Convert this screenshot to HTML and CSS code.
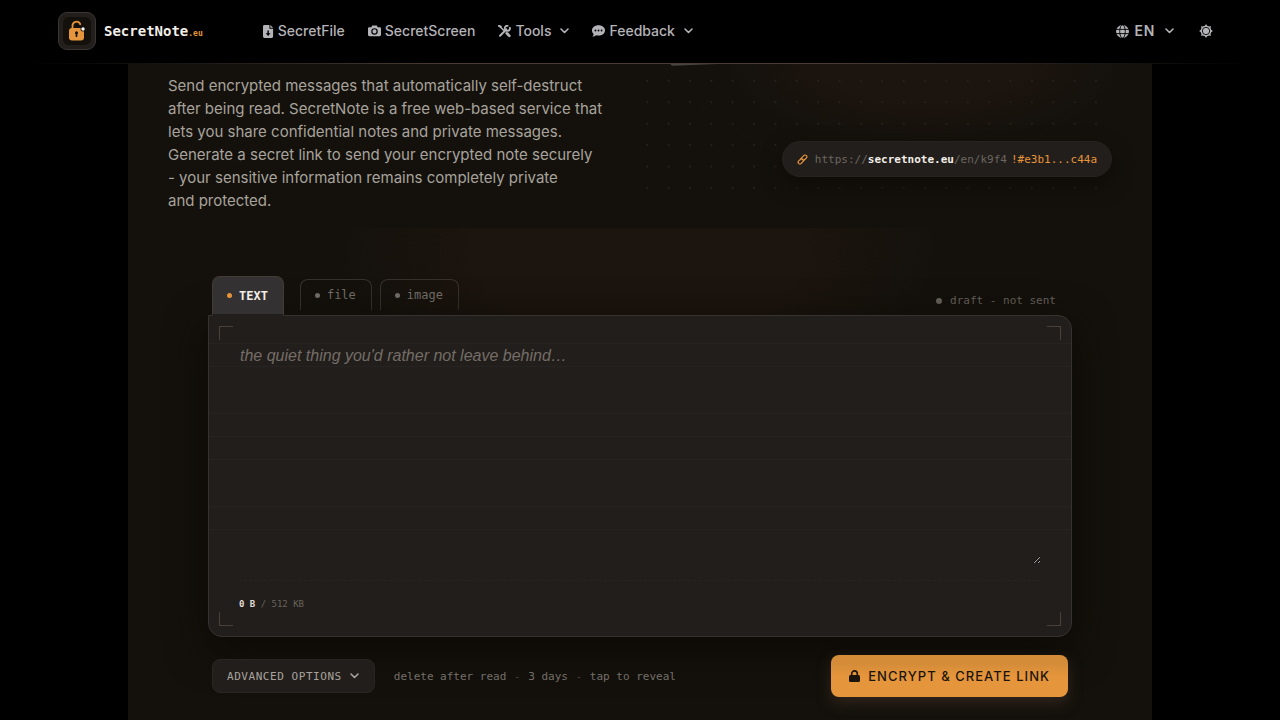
FILE: index.html
```html
<!DOCTYPE html>
<html lang="en">
<head>
    <meta charset="UTF-8">
    <meta name="viewport" content="width=device-width, initial-scale=1.0">
    <title>SecretNote.eu</title>
    <link rel="stylesheet" href="styles.css">
</head>
<body>
    <header class="topbar">
        <a class="brand" href="#">
            <span class="brand-mark">
                <svg width="28" height="28" viewBox="0 0 28 28">
                    <rect width="28" height="28" rx="6" fill="#14100b"/>
                    <path d="M9.500 12V8.800a4 4 0 0 1 7.700-1.600" fill="none" stroke="#e5953b" stroke-width="1.800" stroke-linecap="round"/>
                    <rect x="6" y="11" width="15" height="12.500" rx="3" fill="#e5953b"/>
                    <circle cx="13.500" cy="15.800" r="1.500" fill="#14100b"/>
                    <rect x="12.700" y="16" width="1.600" height="4" fill="#14100b"/>
                    <circle cx="20" cy="12" r="2.500" fill="#14100b"/>
                    <circle cx="20" cy="12" r="1.700" fill="#fff"/>
                </svg>
            </span>
            <span class="brand-name">SecretNote<small>.eu</small></span>
        </a>
        <nav class="nav">
            <a href="#">
                <svg width="11" height="13" viewBox="0 0 12 14"><path fill="currentColor" fill-rule="evenodd" d="M1.500 0H7v4h4v8.500c0 .8-.7 1.500-1.500 1.500h-8C.7 14 0 13.300 0 12.500v-11C0 .7.7 0 1.500 0zM8 0l3 3H8zM4.800 6v3H3l2.600 3L8.200 9H6.400V6z"/></svg>
                SecretFile
            </a>
            <a href="#">
                <svg width="13" height="13" viewBox="0 0 14 14"><path fill="currentColor" fill-rule="evenodd" d="M4.500 0.500h5l.9 1.800h2.100c.8 0 1.500.6 1.500 1.400v6.800c0 .8-.7 1.500-1.500 1.500h-11C.7 12 0 11.300 0 10.500V3.700c0-.8.7-1.400 1.500-1.400h2.100zM7 3.400a3.500 3.500 0 1 0 0 7 3.500 3.500 0 0 0 0-7zm0 1.300a2.200 2.200 0 1 1 0 4.400 2.200 2.200 0 0 1 0-4.400z"/></svg>
                SecretScreen
            </a>
            <a href="#">
                <svg width="13" height="13" viewBox="0 0 14 14" fill="none" stroke="currentColor" stroke-linecap="round"><path d="M2.200 11.500 9 4.700" stroke-width="2.200"/><path d="M12.800 3A2.800 2.800 0 1 1 10.300.8" stroke-width="2"/><path d="M1.300 1 7 6.500" stroke-width="1.600"/><path d="M1.100 1l1.900.8" stroke-width="2.200"/><path d="m9.500 9 2.700 2.700" stroke-width="3"/></svg>
                Tools
                <svg class="caret" width="9" height="6" viewBox="0 0 9 6"><path d="m1 1 3.500 3.500L8 1"/></svg>
            </a>
            <a href="#">
                <svg width="13" height="13" viewBox="0 0 14 14"><path fill="currentColor" fill-rule="evenodd" d="M7 .3c3.900 0 7 2.400 7 5.500s-3.100 5.600-7 5.600c-.9 0-1.700-.1-2.500-.4C3.500 11.800 2 12.500.4 12.500c.8-.9 1.300-1.900 1.400-2.900C.7 8.600 0 7.300 0 5.800 0 2.700 3.100.3 7 .3zM3.700 4.900a1 1 0 1 0 0 2 1 1 0 0 0 0-2zm3.300 0a1 1 0 1 0 0 2 1 1 0 0 0 0-2zm3.300 0a1 1 0 1 0 0 2 1 1 0 0 0 0-2z"/></svg>
                Feedback
                <svg class="caret" width="9" height="6" viewBox="0 0 9 6"><path d="m1 1 3.500 3.500L8 1"/></svg>
            </a>
        </nav>
        <div class="prefs">
            <button class="pref lang" type="button">
                <svg width="13" height="13" viewBox="0 0 14 14"><circle cx="7" cy="7" r="7" fill="currentColor"/><g fill="none" stroke="#000"><path d="M0 4.700h14M0 9.300h14"/><ellipse cx="7" cy="7" rx="3" ry="7"/></g></svg>
                EN
                <svg class="caret" width="9" height="6" viewBox="0 0 9 6"><path d="m1 1 3.500 3.500L8 1"/></svg>
            </button>
            <button class="pref" type="button" aria-label="Theme">
                <svg width="14" height="14" viewBox="0 0 16 16"><path fill="currentColor" d="M8 0l1.900 3.400 3.800-1.100-1.100 3.800L16 8l-3.400 1.900 1.100 3.800-3.800-1.100L8 16l-1.900-3.400-3.800 1.100 1.100-3.800L0 8l3.400-1.900-1.100-3.800 3.800 1.100z"/><circle cx="8" cy="8" r="6.200" fill="currentColor"/><circle cx="8" cy="8" r="4.200" fill="none" stroke="#000"/></svg>
            </button>
        </div>
    </header>

    <main class="page">
        <section class="hero">
            <p class="lead">Send encrypted messages that automatically self-destruct<br> after being read. SecretNote is a free web-based service that<br> lets you share confidential notes and private messages.<br> Generate a secret link to send your encrypted note securely<br> - your sensitive information remains completely private<br> and protected.</p>
            <div class="visual">
                <svg class="dots" viewBox="0 0 530 146">
                    <defs>
                        <pattern id="dot" width="24" height="24" patternUnits="userSpaceOnUse" x="-4" y="7"><circle cx="12" cy="12" r="1"/></pattern>
                    </defs>
                    <circle class="ring" cx="284" cy="-210" r="334"/>
                    <rect width="524" height="146" fill="url(#dot)"/>
                    <path class="sheet" d="M34 0l2 2 50-2z"/>
                </svg>
                <div class="link-pill">
                    <svg width="11" height="11" viewBox="0 0 12 12"><path d="M4.200 6.200 3.800 5.500 7.300 1.800a1.900 1.900 0 0 1 3 2.400L8.500 6.200a1.800 1.800 0 0 1-2.500.1M7.800 5.800l.4.700-3.500 3.700a1.900 1.900 0 0 1-3-2.400l1.800-2a1.800 1.800 0 0 1 2.500-.1"/></svg>
                    <span>https://<b>secretnote.eu</b>/en/k9f4</span><em>!#e3b1...c44a</em>
                </div>
            </div>
        </section>

        <form class="composer">
            <div class="tabs">
                <button class="tab active" type="button">TEXT</button>
                <button class="tab" type="button">file</button>
                <button class="tab" type="button">image</button>
                <span class="status">draft - not sent</span>
            </div>
            <div class="card">
                <i class="corner tl"></i><i class="corner tr"></i><i class="corner bl"></i><i class="corner br"></i>
                <textarea class="note" aria-label="Note" placeholder="the quiet thing you'd rather not leave behind…"></textarea>
                <div class="meter"><b>0 B</b> / 512 KB</div>
            </div>
            <div class="actions">
                <button class="advanced" type="button">ADVANCED OPTIONS
                    <svg class="caret" width="9" height="6" viewBox="0 0 9 6"><path d="m1 1 3.500 3.500L8 1"/></svg>
                </button>
                <span class="summary">delete after read <i>-</i> 3 days <i>-</i> tap to reveal</span>
                <button class="submit" type="submit">
                    <svg width="11" height="13" viewBox="0 0 11 13"><path d="M2.700 6V3.700a2.800 2.800 0 0 1 5.600 0V6" fill="none" stroke="currentColor" stroke-width="1.600"/><rect y="5" width="11" height="7" rx="1.500" fill="currentColor"/></svg>
                    ENCRYPT &amp; CREATE LINK
                </button>
            </div>
        </form>
    </main>
</body>
</html>
```
FILE: styles.css
```css
* {
    box-sizing: border-box;
}

body {
    margin: 0;
    min-height: 100vh;
    display: flex;
    flex-direction: column;
    background: #000;
    color: #a8a39c;
    font-family: Inter, "Liberation Sans", sans-serif;
}

button {
    font-family: inherit;
    cursor: pointer;
}

.caret {
    fill: none;
    stroke: currentColor;
    stroke-width: 1.6;
    stroke-linecap: round;
    stroke-linejoin: round;
}

/* header */
.topbar {
    position: sticky;
    top: 0;
    z-index: 10;
    height: 64px;
    padding: 0 67px 2px 58px;
    display: flex;
    align-items: center;
    background: linear-gradient(90deg, transparent 2%, #4a3c33 35% 65%, transparent 98%) bottom / 100% 1px no-repeat #000;
}

.brand {
    display: flex;
    align-items: center;
    gap: 8px;
    margin-right: 60px;
    color: #f2eee8;
    text-decoration: none;
}

.brand-mark {
    width: 38px;
    height: 38px;
    display: grid;
    place-items: center;
    border: 1px solid #3a3532;
    border-radius: 9px;
    background: #221e1b;
}

.brand-name {
    font: bold 14px "DejaVu Sans Mono", monospace;
}

.brand-name small {
    font-size: 8px;
    color: #e5953b;
}

.nav {
    display: flex;
    align-items: center;
    gap: 23px;
}

.nav a,
.pref {
    display: flex;
    align-items: center;
    gap: 4px;
    color: #b4b3b8;
    font-size: 14px;
    font-weight: 500;
    line-height: 16px;
    text-decoration: none;
}

.nav .caret,
.pref .caret {
    margin-left: 5px;
}

.prefs {
    display: flex;
    gap: 25px;
    margin-left: auto;
}

.pref {
    border: 0;
    padding: 0;
    background: none;
}

.lang {
    gap: 5px;
    font-weight: 600;
    letter-spacing: 0.05em;
}

/* page column */
.page {
    flex: 1;
    width: 80%;
    margin: 0 auto;
    background: #14110c;
}

.hero {
    display: grid;
    grid-template-columns: 424px minmax(0, 1fr);
    gap: 48px;
    padding: 0 40px 16px;
}

.lead {
    margin: 0;
    padding-top: 10px;
    font-size: 15px;
    line-height: 23px;
    white-space: nowrap;
}

.visual {
    position: relative;
    display: flex;
    justify-content: flex-end;
    align-items: flex-end;
    padding-bottom: 35px;
    background: radial-gradient(ellipse 200px 80px at 60% 0, #1c140e 50%, transparent);
}

.dots {
    position: absolute;
    top: 0;
    left: 0;
    width: 100%;
    fill: #292521;
}

.ring {
    fill: none;
    stroke: #18140f;
}

.sheet {
    fill: #4a443e;
}

.link-pill {
    position: relative;
    display: flex;
    align-items: center;
    height: 36px;
    padding: 0 14px;
    border: 1px solid #26221e;
    border-radius: 18px;
    background: #221e1b;
    box-shadow: 0 8px 20px #0f0c08;
    color: #6c6660;
    font: 11px "DejaVu Sans Mono", monospace;
    white-space: nowrap;
}

.link-pill svg {
    margin-right: 7px;
    fill: none;
    stroke: #e5953b;
    stroke-width: 1.3;
    stroke-linecap: round;
}

.link-pill b {
    color: #f2eee8;
}

.link-pill em {
    margin-left: 4px;
    color: #e5953b;
    font-style: normal;
}

/* composer */
.composer {
    padding: 48px 80px 23px;
    background: radial-gradient(ellipse 300px 160px at 50% 20px, #1c140e 55%, transparent) no-repeat;
}

.tabs {
    display: flex;
    align-items: flex-end;
    padding: 0 16px 0 4px;
    font: 12px "DejaVu Sans Mono", monospace;
}

.tab {
    display: flex;
    align-items: center;
    gap: 7px;
    height: 31px;
    margin: 0 8px 5px 0;
    padding: 0 15px 0 14px;
    border: 1px solid #36312d;
    border-bottom: 0;
    border-radius: 8px 8px 0 0;
    background: none;
    color: #746f69;
    font: inherit;
}

.tab::before,
.status::before {
    content: "";
    width: 5px;
    height: 5px;
    border-radius: 50%;
    background: currentColor;
}

/* the open tab covers the card's top border */
.tab.active {
    position: relative;
    z-index: 1;
    height: 40px;
    margin: 0 16px -1px 0;
    background: #343132;
    border-color: #433b35;
    border-bottom: 2px solid #221e1b;
    color: #f2eee8;
    font-weight: bold;
}

.tab.active::before {
    background: #e5953b;
}

.status {
    display: flex;
    align-items: center;
    gap: 8px;
    margin: 0 0 8px auto;
    color: #68635d;
    font-size: 11px;
}

.status::before {
    width: 6px;
    height: 6px;
}

.card {
    position: relative;
    padding: 24px 30px 26px;
    border: 1px solid #36322f;
    border-radius: 0 14px 14px 14px;
    background: repeating-linear-gradient(#272320 0 1px, transparent 1px 23px, #272320 23px 24px, transparent 24px 70px, #272320 70px 71px, transparent 71px 93px) 0 27px / 100% 200px no-repeat #221e1b;
    box-shadow: 0 12px 40px #0c0905;
}

.corner {
    position: absolute;
    width: 14px;
    height: 14px;
    border: 0 solid #4a4038;
}

.tl { top: 10px; left: 10px; border-width: 1px 0 0 1px; }
.tr { top: 10px; right: 10px; border-width: 1px 1px 0 0; }
.bl { bottom: 10px; left: 10px; border-width: 0 0 1px 1px; }
.br { bottom: 10px; right: 10px; border-width: 0 1px 1px 0; }

.note {
    display: block;
    width: 100%;
    height: 224px;
    padding: 4px 1px;
    border: 0;
    outline: 0;
    resize: vertical;
    background: none;
    color: #f2eee8;
    font: 16px/23px "Liberation Sans", sans-serif;
}

.note::placeholder {
    color: #746d67;
    font-style: italic;
}

.meter {
    margin-top: 16px;
    padding-top: 18px;
    border-top: 1px dashed #282420;
    color: #68635d;
    font: 9px/11px "DejaVu Sans Mono", monospace;
}

.meter b {
    color: #e2ddd6;
}

/* positioned so the card's shadow stays underneath */
.actions {
    position: relative;
    display: flex;
    align-items: center;
    margin-top: 18px;
    padding: 0 4px;
    font: 11px "DejaVu Sans Mono", monospace;
}

.advanced {
    display: flex;
    align-items: center;
    gap: 8px;
    height: 34px;
    padding: 0 15px 0 14px;
    border: 1px solid #292521;
    border-radius: 8px;
    background: #221e1c;
    color: #a8a39c;
    font: inherit;
    letter-spacing: 0.05em;
}

.summary {
    margin-left: 19px;
    color: #746f69;
}

.summary i {
    margin: 0 1px;
    color: #45403b;
    font-style: normal;
}

.submit {
    display: flex;
    align-items: center;
    gap: 8px;
    height: 42px;
    margin-left: auto;
    padding: 0 18px;
    border: 0;
    border-radius: 8px;
    background: linear-gradient(#d48c39 20%, #e5953b 50%);
    box-shadow: 0 6px 14px #30251c;
    color: #1b140c;
    font: 500 13px Inter, "Liberation Sans", sans-serif;
    letter-spacing: 0.08em;
}
```
